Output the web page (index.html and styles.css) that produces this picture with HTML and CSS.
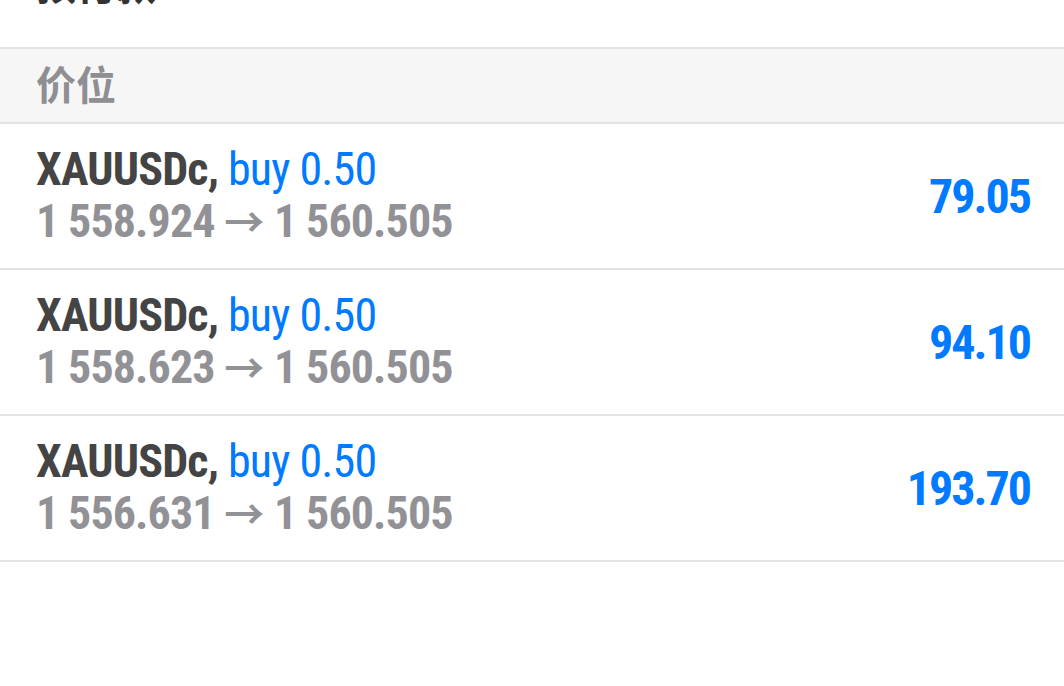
FILE: index.html
```html
<!DOCTYPE html>
<html lang="zh">
<head>
    <meta charset="UTF-8">
    <meta name="viewport" content="width=device-width, initial-scale=1.0">
    <title>交易</title>
    <link rel="stylesheet" href="styles.css">
</head>
<body>

<div class="summary">
    <div class="summary-label">预付款</div>
</div>

<div class="section-header">价位</div>

<ul class="orders">
    <li class="order">
        <div class="order-info">
            <div class="order-title"><span class="symbol">XAUUSDc,</span> <span class="side">buy 0.50</span></div>
            <div class="order-prices">1 558.924 <span class="arrow">→</span> 1 560.505</div>
        </div>
        <div class="order-profit">79.05</div>
    </li>
    <li class="order">
        <div class="order-info">
            <div class="order-title"><span class="symbol">XAUUSDc,</span> <span class="side">buy 0.50</span></div>
            <div class="order-prices">1 558.623 <span class="arrow">→</span> 1 560.505</div>
        </div>
        <div class="order-profit">94.10</div>
    </li>
    <li class="order">
        <div class="order-info">
            <div class="order-title"><span class="symbol">XAUUSDc,</span> <span class="side">buy 0.50</span></div>
            <div class="order-prices">1 556.631 <span class="arrow">→</span> 1 560.505</div>
        </div>
        <div class="order-profit">193.70</div>
    </li>
</ul>

</body>
</html>
```
FILE: styles.css
```css
body {
    margin: 0;
    background: #fff;
    font-family: "Roboto Condensed", Roboto, "Noto Sans CJK SC", sans-serif;
}
.summary {
    height: 47px;
    overflow: hidden;
}
.summary-label {
    margin-top: -39px;
    padding-left: 36px;
    font-family: "Noto Sans CJK SC", sans-serif;
    font-size: 40px;
    line-height: 44px;
    font-weight: bold;
    color: #333;
}
.section-header {
    display: flex;
    align-items: center;
    height: 67px;
    padding: 0 0 6px 36px;
    background: #f6f6f6;
    border-top: 2px solid #e3e3e3;
    border-bottom: 2px solid #e3e3e3;
    font-family: "Noto Sans CJK SC", sans-serif;
    font-size: 40px;
    font-weight: bold;
    color: #8e8e93;
}
.orders {
    list-style: none;
    margin: 0;
    padding: 0;
}
.order {
    display: flex;
    align-items: center;
    justify-content: space-between;
    height: 144px;
    padding: 0 34px 0 36px;
    border-bottom: 2px solid #e3e3e3;
}
.order-info {
    font-size: 46px;
    line-height: 52px;
}
.order-title {
    letter-spacing: -0.8px;
}
.symbol {
    font-weight: bold;
    color: #444;
}
.side {
    color: #007aff;
}
.order-prices {
    font-weight: bold;
    color: #929296;
    letter-spacing: -0.9px;
}
.arrow {
    font-size: 40px;
    letter-spacing: 0;
}
.order-profit {
    font-size: 48px;
    font-weight: bold;
    color: #007aff;
    letter-spacing: -2px;
}
```
